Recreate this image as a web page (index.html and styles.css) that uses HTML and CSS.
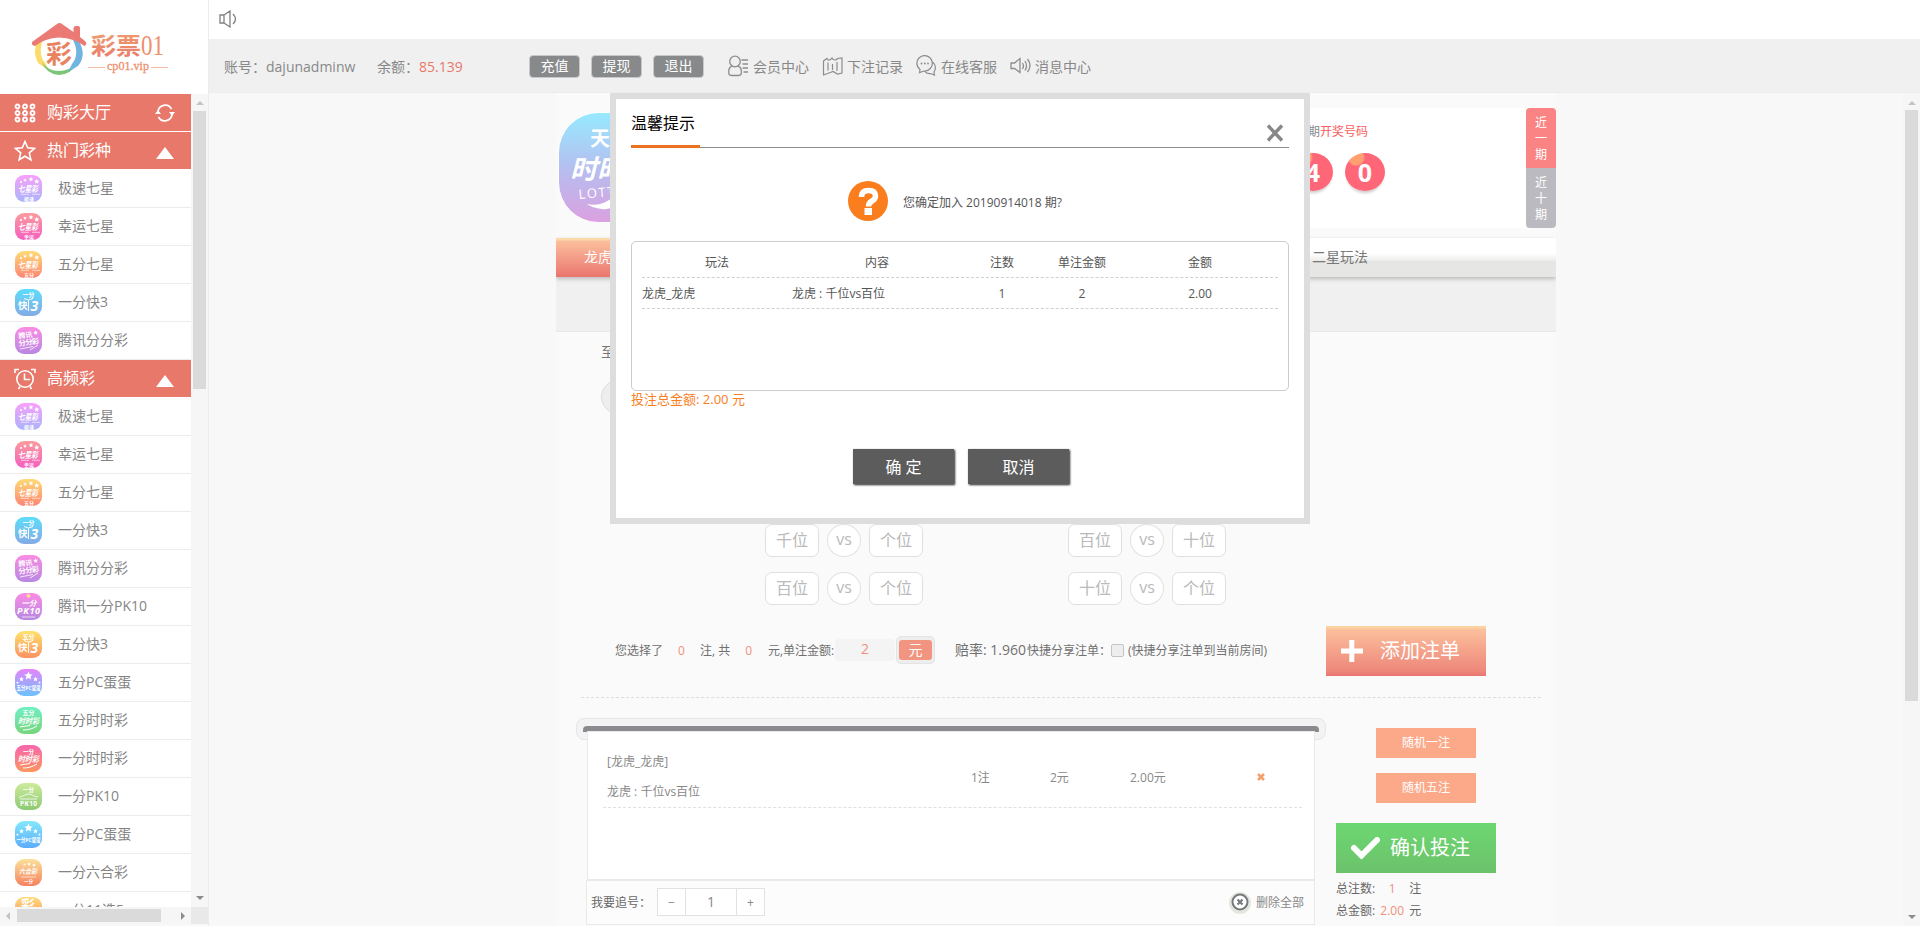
FILE: index.html
```html
<!DOCTYPE html>
<html lang="zh-CN">
<head>
<meta charset="utf-8">
<title>彩票01</title>
<link rel="stylesheet" href="styles.css">
</head>
<body>
<svg class="defs" width="0" height="0">
  <defs>
    <symbol id="star" viewBox="0 0 20 20"><path d="M10 1l2.8 6 6.5.8-4.800 4.500 1.300 6.500L10 15.600 4.200 18.800l1.300-6.500L.7 7.800l6.500-.8z"/></symbol>
    <symbol id="ic-seven" viewBox="0 0 27 27">
      <g fill="#fff"><circle cx="6" cy="7" r="1.100"/><use href="#star" x="8" y="3" width="4" height="4"/><use href="#star" x="13.500" y="1.500" width="5" height="5"/><use href="#star" x="19" y="3.500" width="5.500" height="5.500"/></g>
      <text x="3" y="16.500" font-size="8.500" font-weight="700" font-style="italic" textLength="20" lengthAdjust="spacingAndGlyphs" fill="#fff">七星彩</text>
      <path d="M6 19.300h8M17 19.300h8" stroke="#fff" stroke-opacity=".6"/>
    </symbol>
    <symbol id="ic-k3" viewBox="0 0 27 27">
      <path d="M9 9.500l4.500 1.500L18 9.500M13.500 11v11" stroke="#fff" fill="none"/>
      <text x="3" y="20" font-size="9.500" font-weight="700" fill="#fff">快</text>
      <text x="15.500" y="22" font-size="14" font-weight="700" font-style="italic" fill="#fff">3</text>
    </symbol>
    <symbol id="ic-tx" viewBox="0 0 27 27">
      <g transform="rotate(-7 13 13)" fill="#fff" font-weight="700"><text x="4" y="10.500" font-size="7">腾讯</text><text x="3" y="18" font-size="7.500" textLength="21">分分彩</text><use href="#star" x="19" y="4" width="5" height="5"/></g>
      <path d="M5 22l13-2.500M15 23l8-5" stroke="#fff" stroke-opacity=".8"/>
    </symbol>
    <symbol id="ic-pk" viewBox="0 0 27 27">
      <circle cx="13.500" cy="2.800" r="2" fill="#fd9"/>
      <text x="6.500" y="12.500" font-size="7.500" font-weight="700" font-style="italic" fill="#fff">一分</text>
      <text x="2" y="21" font-size="9" font-weight="700" font-style="italic" textLength="23" fill="#fff">PK10</text>
      <path d="M7 24h13" stroke="#fff" stroke-opacity=".7"/>
    </symbol>
    <symbol id="ic-pc" viewBox="0 0 27 27">
      <g fill="#fff"><use href="#star" x="9" y="2" width="9" height="9"/><use href="#star" x="4" y="7.500" width="5" height="5"/><use href="#star" x="18" y="7.500" width="5" height="5"/><use href="#star" x="1" y="12" width="3" height="3"/><use href="#star" x="23" y="12" width="3" height="3"/></g>
    </symbol>
    <symbol id="ic-ssc" viewBox="0 0 27 27">
      <text x="3" y="16.500" font-size="8" font-weight="700" font-style="italic" textLength="21" lengthAdjust="spacingAndGlyphs" fill="#fff">时时彩</text>
      <path d="M5 20l10-1.500M8 23c5 0 9-1 14-4" stroke="#fff" fill="none"/>
    </symbol>
    <symbol id="ic-car" viewBox="0 0 27 27">
      <path d="M4 14.500c3-1.500 5-1.500 7-3 3-.7 6 0 8 1.500l4 1M5 16h17" stroke="#fff" fill="none" stroke-opacity=".8"/>
      <text x="5" y="23" font-size="6.500" font-weight="700" textLength="17" fill="#fff">PK10</text>
    </symbol>
    <symbol id="ic-lhc" viewBox="0 0 27 27">
      <g fill="#fff"><use href="#star" x="8" y="4" width="3" height="3"/><use href="#star" x="12" y="3" width="4" height="4"/><use href="#star" x="17" y="4" width="4" height="4"/></g>
      <text x="4" y="15" font-size="7" font-weight="700" font-style="italic" textLength="18" lengthAdjust="spacingAndGlyphs" fill="#fff">六合彩</text>
      <path d="M6 18h15" stroke="#fff" stroke-opacity=".6"/>
    </symbol>
  </defs>
</svg>
<div class="page">
  <aside class="side">
    <svg class="brand" width="208" height="94" viewBox="0 0 208 94">
      <defs><linearGradient id="bt" x1="0" y1="0" x2="0" y2="1"><stop offset="0" stop-color="#f0a06e"/><stop offset="1" stop-color="#ea7a6c"/></linearGradient></defs>
      <g stroke="none">
        <path d="M38 40Q32 52 38 63L48 70 46 64Q38 56 42 42z" fill="#fbdc6a"/>
        <path d="M42 62Q46 74 59 75 72 74 77 63 69 71 59 71 48 71 42 62z" fill="#7cc576"/>
        <path d="M77 38Q88 54 78 66L68 72 72 64Q80 54 73 40z" fill="#70b4df"/>
      </g>
      <path d="M32 42L57 24q2.500-2 5 0l11.500 8V28q0-2 2.500-2h2q2 0 2 2v9l5.500 4.500q2 2.500-1 4.500-10-8-25.500-8.500Q45 38 35 46q-4-1-3-4z" fill="#ea7a73"/>
      <text x="46" y="63" font-size="25" font-weight="700" textLength="26" lengthAdjust="spacingAndGlyphs" fill="#e8825f">彩</text>
      <text x="91" y="53.500" font-size="23" font-weight="700" textLength="50" lengthAdjust="spacingAndGlyphs" fill="url(#bt)">彩票</text>
      <text class="serif" x="141" y="55" font-size="29" textLength="23" lengthAdjust="spacingAndGlyphs" fill="#ee8f6d">01</text>
      <text class="serif" x="107" y="70" font-size="12" textLength="42" lengthAdjust="spacingAndGlyphs" fill="#ee9070" stroke="#ee9070" stroke-width=".3">cp01.vip</text>
      <path d="M88 67.500h17M151 67.500h17" stroke="#f3b79b"/>
    </svg>
    <div class="side-body">
      <div class="menu">
        <div class="mh"><svg width="22" height="20" viewBox="0 0 22 20"><g fill="none" stroke="#fff" stroke-width="1.800"><circle cx="3.500" cy="3.500" r="2"/><circle cx="11" cy="3.500" r="2"/><circle cx="18.500" cy="3.500" r="2"/><circle cx="3.500" cy="10" r="2"/><circle cx="11" cy="10" r="2"/><circle cx="18.500" cy="10" r="2"/><circle cx="3.500" cy="16.500" r="2"/><circle cx="11" cy="16.500" r="2"/><circle cx="18.500" cy="16.500" r="2"/></g></svg><span>购彩大厅</span><svg class="mr" width="20" height="18" viewBox="0 0 20 18"><path d="M3 8a7.200 7.200 0 0 1 13.500-3M17 10a7.200 7.200 0 0 1-13.500 3" fill="none" stroke="#fff" stroke-width="1.700"/><path d="M0 10l3-4 3 4zM14 8h6l-3 4z" fill="#fff"/></svg></div>
        <div class="mh"><svg width="22" height="22" viewBox="0 0 22 22"><path d="M11 1.500l2.700 6.300 6.800.6-5.200 4.500 1.600 6.900-5.900-3.600-5.900 3.600 1.600-6.900L1.500 8.400l6.800-.6z" fill="none" stroke="#fff" stroke-width="1.600"/></svg><span>热门彩种</span><i class="tri"></i></div>
        <div class="mi"><b class="lt c1"><svg><use href="#ic-seven"/><text x="9" y="25.500" font-size="5">极速</text></svg></b>极速七星</div>
        <div class="mi"><b class="lt c2"><svg><use href="#ic-seven"/><text x="9" y="25.500" font-size="5">幸运</text></svg></b>幸运七星</div>
        <div class="mi"><b class="lt c3"><svg><use href="#ic-seven"/><text x="9" y="25.500" font-size="5">五分</text></svg></b>五分七星</div>
        <div class="mi"><b class="lt c4"><svg><use href="#ic-k3"/><text x="7.500" y="7.500" font-size="6">一分</text></svg></b>一分快3</div>
        <div class="mi"><b class="lt c5"><svg><use href="#ic-tx"/></svg></b>腾讯分分彩</div>
        <div class="mh"><svg width="22" height="22" viewBox="0 0 22 22"><g fill="none" stroke="#fff" stroke-width="1.600"><circle cx="11" cy="11" r="8.200"/><path d="M10.500 5.500V11.500H16M1 5V1.500H5M17 1.500h4V5M6 18.500L4.500 21M16 18.500l1.500 2.500"/></g></svg><span>高频彩</span><i class="tri"></i></div>
        <div class="mi"><b class="lt c1"><svg><use href="#ic-seven"/><text x="9" y="25.500" font-size="5">极速</text></svg></b>极速七星</div>
        <div class="mi"><b class="lt c2"><svg><use href="#ic-seven"/><text x="9" y="25.500" font-size="5">幸运</text></svg></b>幸运七星</div>
        <div class="mi"><b class="lt c3"><svg><use href="#ic-seven"/><text x="9" y="25.500" font-size="5">五分</text></svg></b>五分七星</div>
        <div class="mi"><b class="lt c4"><svg><use href="#ic-k3"/><text x="7.500" y="7.500" font-size="6">一分</text></svg></b>一分快3</div>
        <div class="mi"><b class="lt c5"><svg><use href="#ic-tx"/></svg></b>腾讯分分彩</div>
        <div class="mi"><b class="lt c5"><svg><use href="#ic-pk"/></svg></b>腾讯一分PK10</div>
        <div class="mi"><b class="lt c6"><svg><use href="#ic-k3"/><text x="7.500" y="7.500" font-size="6">五分</text></svg></b>五分快3</div>
        <div class="mi"><b class="lt c7"><svg><use href="#ic-pc"/><text x="1.500" y="21" font-size="5.500" textLength="24" lengthAdjust="spacingAndGlyphs">五分PC蛋蛋</text></svg></b>五分PC蛋蛋</div>
        <div class="mi"><b class="lt c8"><svg><use href="#ic-ssc"/><text x="7.500" y="8" font-size="6">五分</text></svg></b>五分时时彩</div>
        <div class="mi"><b class="lt c9"><svg><use href="#ic-ssc"/><text x="8" y="8.500" font-size="5.500">一分</text></svg></b>一分时时彩</div>
        <div class="mi"><b class="lt c10"><svg><use href="#ic-car"/><text x="8" y="8.500" font-size="5.500">一分</text></svg></b>一分PK10</div>
        <div class="mi"><b class="lt c11"><svg><use href="#ic-pc"/><text x="1.500" y="21" font-size="5.500" textLength="24" lengthAdjust="spacingAndGlyphs">一分PC蛋蛋</text></svg></b>一分PC蛋蛋</div>
        <div class="mi"><b class="lt c12"><svg><use href="#ic-lhc"/><text x="9" y="24" font-size="4.500">一分</text></svg></b>一分六合彩</div>
        <div class="mi"><b class="lt c3"><svg><text x="6" y="13" font-size="14">彩</text></svg></b>一分11选5</div>
      </div>
      <div class="vbar"><i class="up"></i><div class="thumb"></div><i class="down"></i></div>
    </div>
    <div class="hrow"><div class="hbar"><i class="left"></i><div class="hthumb"></div><i class="right"></i></div><div class="corner"></div></div>
  </aside>

  <div class="right-col">
    <div class="notice"><svg width="20" height="18" viewBox="0 0 20 18"><g fill="none" stroke="#808080" stroke-width="1.300"><path d="M1 5h4v8H1zM5 5l6-4v16l-6-4M14 4q5 5 0 10"/></g></svg></div>
    <div class="account">
      <span class="acc">账号：dajunadminw</span><span class="bal">余额：<em>85.139</em></span>
      <div class="btns"><span>充值</span><span>提现</span><span>退出</span></div>
      <a class="link"><svg width="21" height="22" viewBox="0 0 21 22"><g fill="none" stroke="#8d8d8d" stroke-width="1.300"><circle cx="7" cy="6.500" r="5.300"/><path d="M4 11Q.8 12.500.8 15.500v2.500q0 2.500 3 2.500h6.500q3 0 3-2.500v-2.500q0-3-3.200-4.500M13.500 5H20M14.500 9H20M14.500 13H20M15.500 17H20"/></g></svg>会员中心</a>
      <a class="link"><svg width="21" height="22" viewBox="0 0 21 22"><g fill="none" stroke="#8d8d8d" stroke-width="1.200"><path d="M1.500 6L5 3.500q1 2 2.500 1.500T10 3q1 2 3 2t2.500-1.500L20 3v15l-4.500 1-4.500-2.500-4 1.500-5.500 2zM6 7.500v8M10.500 9v6M15 7v9"/></g></svg>下注记录</a>
      <a class="link"><svg width="21" height="22" viewBox="0 0 21 22"><g fill="none" stroke="#8d8d8d" stroke-width="1.200"><path d="M4 14.500A7.700 7.700 0 1 1 8 16L3.500 17.500zM16.500 7q4 3 2.500 8l-1 2 .5 3-4-1.500q-4 .5-5.500-2"/></g><g fill="#8d8d8d"><circle cx="5.500" cy="8.500" r=".9"/><circle cx="8.800" cy="8.500" r=".9"/><circle cx="12" cy="8.500" r=".9"/></g></svg>在线客服</a>
      <a class="link"><svg width="21" height="20" viewBox="0 0 21 20"><g fill="none" stroke="#8d8d8d" stroke-width="1.300"><path d="M1 7h3.500L10 2.500v14L4.500 12.500H1zM12.500 7q2 3 0 6M15 5q3 5 0 9.500M17.500 3q5 6.500 0 13"/></g></svg>消息中心</a>
    </div>
    <div class="work">
      <main class="main">
        <section class="draw">
          <svg class="game" width="111" height="111" viewBox="0 0 111 111">
            <defs><linearGradient id="gg" x1="0" y1="0" x2="0" y2="1"><stop offset="0" stop-color="#96eaff"/><stop offset=".5" stop-color="#b5bff0"/><stop offset="1" stop-color="#dba0e0"/></linearGradient></defs>
            <rect x=".5" y=".5" width="110" height="110" rx="40" fill="url(#gg)" stroke="#fff"/>
            <g fill="#fff" font-weight="700"><text x="32" y="34" font-size="20">天天</text><text x="12" y="67" font-size="27" font-style="italic">时时彩</text></g>
            <text x="21" y="87" font-size="13" letter-spacing="1.500" fill="#fff" transform="rotate(-5 21 87)">LOTTERY</text>
            <path d="M29 92q15 3 26-7h10q-8 14-21 12-10-1-15-5z" fill="#fff"/>
          </svg>
          <div class="result">
            <div class="rt">第20190914017期<em>开奖号码</em></div>
            <div class="balls"><b>4</b><b>0</b></div>
          </div>
          <div class="tabs"><div>近<br>一<br>期</div><div class="off">近<br>十<br>期</div></div>
        </section>
        <nav class="nav"><span class="on">龙虎</span><span class="two">二星玩法</span></nav>
        <div class="subnav"></div>
        <section class="play">
          <p class="tip">至少选择1注</p>
          <div class="knob"></div>
        </section>
        <section class="vs">
          <div class="pair"><span>千位</span><i>vs</i><span>个位</span></div><div class="pair"><span>百位</span><i>vs</i><span>十位</span></div>
          <div class="pair"><span>百位</span><i>vs</i><span>个位</span></div><div class="pair"><span>十位</span><i>vs</i><span>个位</span></div>
        </section>
        <section class="pick">
          <span class="w85">您选择了<em>0</em></span><span class="w68">注, 共<em>0</em></span><span class="w67">元,单注金额:</span>
          <span class="inp">2</span><span class="unit"><b>元</b></span>
          <span class="odds">赔率: 1.960</span><span class="share">快捷分享注单：</span><i class="chk"></i><span class="room">(快捷分享注单到当前房间)</span>
          <div class="big add"><svg width="22" height="22" viewBox="0 0 22 22"><path d="M8.300 0h5v8.500H22v5h-8.700V22h-5v-8.500H0v-5h8.300z" fill="#fff"/></svg>添加注单</div>
        </section>
        <section class="cart">
          <div class="cart-l">
            <div class="rail"><div></div></div>
            <div class="list">
              <div class="line"><div class="nm">[龙虎_龙虎]<br>龙虎 : 千位vs百位</div><span class="k1">1注</span><span class="k2">2元</span><span class="k3">2.00元</span><svg width="8" height="8" viewBox="0 0 8 8"><path d="M1 1l6 6M7 1L1 7" stroke="#f4a06c" stroke-width="2.600"/></svg></div>
            </div>
            <div class="chase"><span>我要追号：</span><div class="spin"><i>−</i><b>1</b><i>+</i></div><svg width="24" height="24" viewBox="0 0 24 24"><circle cx="12" cy="13" r="11" fill="#e3e7de"/><circle cx="12" cy="12" r="7.500" fill="#fff" stroke="#77797c" stroke-width="2"/><path d="M9.500 9.500l5 5M14.500 9.500l-5 5" stroke="#77797c" stroke-width="2.200"/></svg><span class="del">删除全部</span></div>
          </div>
          <div class="cart-r">
            <div class="rnd">随机一注</div>
            <div class="rnd">随机五注</div>
            <div class="big ok"><svg width="29" height="22" viewBox="0 0 29 22"><path d="M3 11l7.500 7.500L26 3" fill="none" stroke="#fff" stroke-width="6" stroke-linecap="round"/></svg>确认投注</div>
            <p>总注数:<em>1</em>注</p>
            <p>总金额:<em>2.00</em>元</p>
          </div>
        </section>
      </main>
      <div class="vbar page-bar"><i class="up"></i><div class="thumb"></div><i class="down"></i></div>
    </div>
  </div>
</div>

<div class="modal">
  <header><h3>温馨提示</h3><svg width="18" height="18" viewBox="0 0 18 18"><path d="M2 1.500l14 15M16 1.500L2 16.500" stroke="#888" stroke-width="3.400"/></svg></header>
  <div class="ask"><svg width="40" height="40" viewBox="0 0 40 40"><circle cx="20" cy="20" r="20" fill="#fa7d1e"/><path d="M13.500 16q0-6.500 7-6.500 7 0 7 5.500 0 3-3.500 5-3.500 2-3.500 5.500" fill="none" stroke="#fff" stroke-width="5.500"/><path d="M16.500 27h7.500v7h-7.500z" fill="#fff"/></svg>您确定加入 20190914018 期?</div>
  <div class="box">
    <div class="tr th"><span>玩法</span><span>内容</span><span>注数</span><span>单注金额</span><span>金额</span></div>
    <div class="tr"><span>龙虎_龙虎</span><span>龙虎 : 千位vs百位</span><span>1</span><span>2</span><span>2.00</span></div>
  </div>
  <div class="sum">投注总金额: 2.00 元</div>
  <div class="acts"><button>确 定</button><button>取消</button></div>
</div>
</body>
</html>
```
FILE: styles.css
```css
*{box-sizing:border-box}
html{height:926px;overflow:hidden}
body{margin:0;height:926px;overflow:hidden;background:#f8f8f8;font:14px "Open Sans","Noto Sans CJK SC",sans-serif;color:#888;position:relative}
em,i{font-style:normal}
svg{display:block;flex:none}
.defs{position:absolute}
.serif{font-family:"Liberation Serif",serif}
.page{display:flex;height:926px}
.side{width:209px;flex:none;border-right:1px solid #ececec;background:linear-gradient(#fff 94px,#f8f8f8 94px)}
.side-body{display:flex;height:813px}
.menu{width:191px;height:813px;overflow:hidden;background:#fff}
.mh{height:38px;border-bottom:1px solid #fff;background:#e8786a;background-clip:padding-box;display:flex;align-items:center;padding:0 16px 0 14px;color:#fff;font-size:16px;line-height:37px}
.mh span{margin-left:11px;flex:1}
.tri{border:9px solid transparent;border-top:0;border-bottom:12px solid #fff;margin:4px 1px 0 0}
.mi{height:38px;border-bottom:1px solid #ececec;display:flex;align-items:center;padding:0 0 2px 15px;line-height:34px;color:#848484}
.lt{width:27px;height:27px;border-radius:9px;margin:2px 16px 0 0;flex:none;overflow:hidden}
.lt svg{width:27px;height:27px;fill:#fff;font-weight:700}
.c1{background:linear-gradient(#f9a0fb,#a9b4fb)}
.c2{background:linear-gradient(#fb9c9c,#f55fc0)}
.c3{background:linear-gradient(#ffda75,#fd8574)}
.c4{background:linear-gradient(#5ddcfb,#83abe4)}
.c5{background:linear-gradient(#fb8ce4,#b888e2)}
.c6{background:linear-gradient(#ffe26c,#fb9162)}
.c7{background:linear-gradient(#e584fb,#6bc2fb)}
.c8{background:linear-gradient(#6ff0c4,#78d47c)}
.c9{background:linear-gradient(#f766b0,#fc9660)}
.c10{background:linear-gradient(#cdeb9c,#8cca74)}
.c11{background:linear-gradient(#84e8fb,#5cacfb)}
.c12{background:linear-gradient(#fbe29a,#f68060)}
.vbar{width:17px;background:#f6f6f6;display:flex;flex-direction:column;align-items:center}
.up{border:4px solid transparent;border-top:0;border-bottom-color:#c4c4c4;margin-top:7px}
.down{border:4px solid transparent;border-bottom:0;border-top-color:#8c8c8c;margin-top:auto;margin-bottom:7px}
.thumb{width:13px;height:278px;background:#dadada;margin-top:6px}
.hrow{display:flex;height:17px}
.hbar{width:191px;background:#f6f6f6;display:flex;align-items:center;padding:0 6px}
.corner{width:17px;background:#e9e9e9}
.left{border:4px solid transparent;border-left:0;border-right-color:#c4c4c4}
.right{border:4px solid transparent;border-right:0;border-left-color:#8c8c8c;margin-left:auto}
.hthumb{width:144px;height:13px;background:#dadada;margin-left:7px}
.right-col{flex:1;min-width:0}
.notice{height:39px;background:#fff;padding:10px 0 0 10px}
.account{height:54px;background:#f0f0f0;display:flex;align-items:center;padding-left:15px;border-bottom:1px solid #ededed;white-space:nowrap}
.account em{color:#e8786a}
.acc{width:153px}
.bal{width:152px}
.btns{display:flex;gap:11px;width:199px;margin-top:2px}
.btns span{width:51px;height:23px;background:#87898b;border:1px solid #c9c9c9;border-radius:4px;color:#fff;line-height:20px;text-align:center}
.link{display:flex;align-items:center;gap:4px;width:94px}
.work{display:flex;height:833px}
.main{width:1000px;margin:0 auto;background:#fafafa;height:833px;overflow:hidden}
.page-bar .thumb{height:591px}
.page-bar .up{margin-top:8px}
.page-bar .thumb{margin-top:5px}
.draw{display:flex;padding:15px 0 10px;height:145px}
.game{margin:4px 0 0 2px}
.result{flex:1;background:#fff;height:120px;margin-left:14px;padding:15px 0 0 530px;font-size:12px;line-height:18px;white-space:nowrap}
.rt{width:155px;text-align:right}
.rt em{color:#fa6060}
.balls{display:flex;gap:12px;margin:12px 0 0 80px}
.balls b{width:40px;height:38px;border-radius:50%;background:radial-gradient(circle at 28% 12%,#ffa070 0 7px,#ff6678 9px);color:#fff;font-size:25px;line-height:38px;text-align:center;box-shadow:0 4px 3px -2px #ccc}
.tabs{width:30px;margin-top:0}
.tabs div{height:60px;background:#fa8383;color:#fff;font-size:12px;line-height:16px;text-align:center;padding:7px 0 0;border-radius:4px 4px 0 0}
.tabs .off{background:#bbbac0;border-radius:0 0 4px 4px}
.nav{height:39px;display:flex;justify-content:space-between;background:linear-gradient(#fff 40%,#eeeeed 57%,#e6e6e4 60%);line-height:38px;box-shadow:0 2px 4px #bbb;position:relative;color:#777}
.on{width:100px;padding-left:28px;color:#fff;background:linear-gradient(#fcd9a8 0 2px,#fbbf9c 3px,#ea766f)}
.two{width:244px}
.subnav{height:55px;background:#f0f0f0;border-bottom:1px solid #e9e9e9}
.play{height:192px;padding:9px 0 0 45px;color:#777}
.tip{margin:0;line-height:22px}
.knob{width:34px;height:34px;border-radius:50%;background:#eee;border:1px solid #ddd;margin-top:17px}
.vs{display:grid;grid-template-columns:303px 303px;row-gap:15px;padding-left:209px}
.pair{display:flex;gap:8px;height:33px;color:#bababa;font-size:16px;line-height:31px;text-align:center}
.pair span{width:54px;border:1px solid #e0e0e0;border-radius:7px;background:#fff}
.pair i{width:34px;border:1px solid #e0e0e0;border-radius:50%;background:#fff;line-height:29px}
.pick{display:flex;align-items:center;margin:20px 15px 0 25px;height:73px;border-bottom:1px dashed #ddd;padding:0 0 22px 34px;font-size:12px;color:#707070;white-space:nowrap}
.pick em,.pick .inp{color:#f0907c}
.pick em{margin-left:15px}
.w85{width:85px}.w68{width:68px}.w67{width:67px}
.inp{width:60px;height:22px;background:#f4f4f4;border-radius:4px;text-align:center;font-size:14px;line-height:20px}
.unit{width:39px;height:28px;border:1px solid #e4e4e4;background:#eee;border-radius:5px;padding:3px 2px;margin-left:1px}
.unit b{display:block;height:20px;background:#f29580;border-radius:3px;color:#fff;font-size:14px;font-weight:400;line-height:20px;text-align:center}
.odds{font-size:14px;width:72px;margin:-2px 0 0 20px}
.share{width:84px}
.chk{width:13px;height:13px;border:1px solid #c4c4c4;border-radius:2px;background:#eee}
.room{margin-left:4px;width:198px}
.big{width:160px;height:50px;color:#fff;font-size:20px;line-height:50px;display:flex;align-items:center;padding-left:15px}
.add{background:linear-gradient(#fbd3a0 0 2px,#fcc09c 3px,#ee877b 90%,#ea7570);gap:17px;margin-top:2px}
.ok{background:linear-gradient(#6dd771,#6cc26b);gap:10px;margin-top:20px}
.cart{display:flex}
.cart-l{width:750px;margin:20px 0 0 20px}
.rail{height:22px;border:1px solid #e6e6e6;border-radius:8px;background:#f3f3f3;padding:7px 6px}
.rail div{height:6px;border-radius:4px 4px 0 0;background:#898b8f}
.list{width:728px;margin:-9px 0 0 11px;height:149px;background:#fff;border:1px solid #e9e9e9;position:relative;padding:16px 12px 0 15px}
.line{height:60px;border-bottom:1px dashed #e0e0e0;display:flex;align-items:center;font-size:12px;padding:0 0 2px 4px}
.nm{width:364px;line-height:30px}
.k1{width:79px}.k2{width:80px}.k3{width:127px}
.chase{width:729px;height:45px;margin-left:10px;border:1px solid #e9e9e9;display:flex;align-items:center;font-size:12px;padding:0 0 1px 4px;background:#fcfcfc}
.chase span{width:66px;color:#666}
.chase .del{color:#888;width:58px;margin-left:4px}
.spin{display:flex;width:108px;height:28px;border:1px solid #e2e2e2;background:#fff;text-align:center;line-height:27px;margin-right:463px}
.spin i{width:27px}
.spin b{flex:1;font-weight:400;font-size:14px;border:1px solid #e2e2e2;border-width:0 1px;line-height:25px}
.cart-r{width:160px;margin:30px 0 0 10px;font-size:12px;color:#666}
.rnd{width:100px;height:30px;background:#fca98a;color:#fff;line-height:30px;text-align:center;margin:0 0 15px 40px}
.cart-r p{margin:0;line-height:22px;display:flex}
.cart-r .ok+p{margin-top:5px}
.cart-r em{width:34px;text-align:center;color:#f0907c}
.modal{position:absolute;left:610px;top:93px;width:700px;height:431px;border:6px solid #ddd;background:#fff;padding:0 15px;color:#555;font-size:12px}
.modal header{display:flex;justify-content:space-between;height:49px;border-bottom:1px solid #8c8c8c;padding-right:5px}
.modal h3{margin:0;width:69px;height:49px;border-bottom:3px solid #ec7220;font-size:16px;font-weight:400;color:#000;line-height:48px}
.modal header svg{margin-top:25px}
.ask{display:flex;gap:15px;padding:33px 0 0 217px;line-height:44px;height:93px}
.box{height:150px;border:1px solid #ccc;border-radius:5px;padding:5px 10px}
.tr{display:grid;grid-template-columns:150px 170px 80px 80px 1fr;height:31px;border-bottom:1px dashed #d0d0d0;line-height:31px;text-align:center}
.tr:not(.th) span:nth-child(-n+2){text-align:left}
.sum{color:#fa7d1e;font-size:13px;line-height:17px}
.acts{display:flex;justify-content:center;gap:14px;padding:41px 0 0 2px}
.acts button{width:101px;height:35px;border:0;background:#5c5c5c;color:#fff;font:16px "Open Sans","Noto Sans CJK SC",sans-serif;box-shadow:1px 1px 2px #222;padding:0 0 2px}
```
